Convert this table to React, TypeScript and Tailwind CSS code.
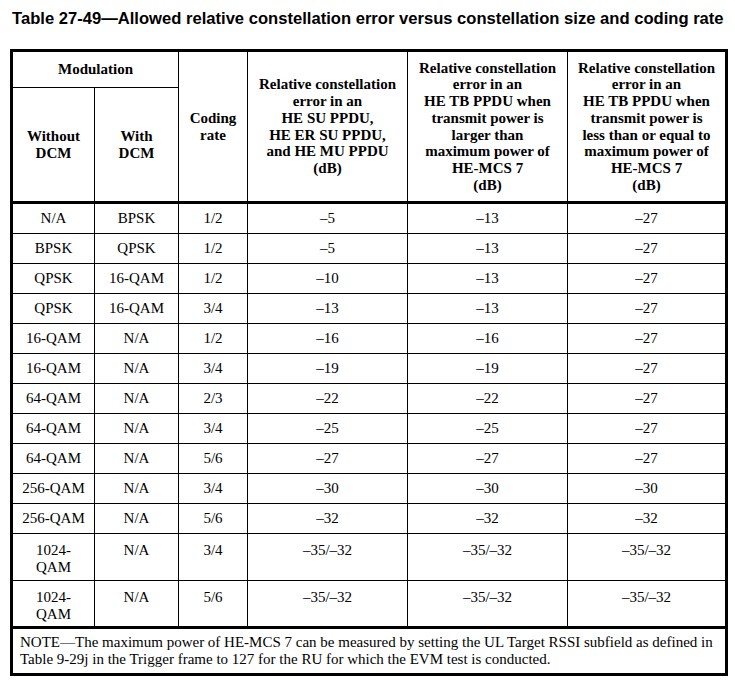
const rows: string[][] = [
	["N/A", "BPSK", "1/2", "–5", "–13", "–27"],
	["BPSK", "QPSK", "1/2", "–5", "–13", "–27"],
	["QPSK", "16-QAM", "1/2", "–10", "–13", "–27"],
	["QPSK", "16-QAM", "3/4", "–13", "–13", "–27"],
	["16-QAM", "N/A", "1/2", "–16", "–16", "–27"],
	["16-QAM", "N/A", "3/4", "–19", "–19", "–27"],
	["64-QAM", "N/A", "2/3", "–22", "–22", "–27"],
	["64-QAM", "N/A", "3/4", "–25", "–25", "–27"],
	["64-QAM", "N/A", "5/6", "–27", "–27", "–27"],
	["256-QAM", "N/A", "3/4", "–30", "–30", "–30"],
	["256-QAM", "N/A", "5/6", "–32", "–32", "–32"],
];

const tallRows: string[][] = [
	["N/A", "3/4", "–35/–32", "–35/–32", "–35/–32"],
	["N/A", "5/6", "–35/–32", "–35/–32", "–35/–32"],
];

function Lines({ lines }: { lines: string[] }) {
	return (
		<>
			{lines.map((l, i) => (
				<span key={i} className="block whitespace-nowrap">
					{l}
				</span>
			))}
		</>
	);
}

export default function App() {
	const head = "bg-white font-bold flex flex-col items-center justify-center text-center";
	return (
		<div className="min-h-[683px] w-[735px] bg-white text-black">
			<div className="pl-[12px] pt-[9px] font-['Liberation_Sans',Arial,sans-serif] text-[16.6px] font-bold leading-[20px] whitespace-nowrap">
				Table 27-49—Allowed relative constellation error versus constellation size and coding rate
			</div>

			<div className="mt-[20px] ml-[10px] grid w-[718px] grid-cols-[81px_83px_68px_159px_159px_157px] grid-rows-[35px_115px_repeat(11,29px)_46px_45px_46px] gap-px border-[3px] border-black bg-black font-['Liberation_Serif','Times_New_Roman',serif] text-[15px] leading-[16.7px]">
				{/* header */}
				<div className={`${head} col-span-2`}>Modulation</div>
				<div className={`${head} row-span-2 border-b-2 border-black`}>
					<Lines lines={["Coding", "rate"]} />
				</div>
				<div className={`${head} row-span-2 border-b-2 border-black`}>
					<Lines
						lines={[
							"Relative constellation",
							"error in an",
							"HE SU PPDU,",
							"HE ER SU PPDU,",
							"and HE MU PPDU",
							"(dB)",
						]}
					/>
				</div>
				<div className={`${head} row-span-2 border-b-2 border-black`}>
					<Lines
						lines={[
							"Relative constellation",
							"error in an",
							"HE TB PPDU when",
							"transmit power is",
							"larger than",
							"maximum power of",
							"HE-MCS 7",
							"(dB)",
						]}
					/>
				</div>
				<div className={`${head} row-span-2 border-b-2 border-black`}>
					<Lines
						lines={[
							"Relative constellation",
							"error in an",
							"HE TB PPDU when",
							"transmit power is",
							"less than or equal to",
							"maximum power of",
							"HE-MCS 7",
							"(dB)",
						]}
					/>
				</div>
				<div className={`${head} border-b-2 border-black`}>
					<Lines lines={["Without", "DCM"]} />
				</div>
				<div className={`${head} border-b-2 border-black`}>
					<Lines lines={["With", "DCM"]} />
				</div>

				{/* body */}
				{rows.map((r, i) =>
					r.map((c, j) => (
						<div key={`${i}-${j}`} className="bg-white pt-[6px] text-center">
							{c}
						</div>
					)),
				)}
				{tallRows.map((r, i) => (
					<>
						<div key={`t${i}`} className="bg-white pt-[8px] text-center">
							<Lines lines={["1024-", "QAM"]} />
						</div>
						{r.map((c, j) => (
							<div key={`t${i}-${j}`} className="bg-white pt-[8px] text-center">
								{c}
							</div>
						))}
					</>
				))}

				{/* note */}
				<div className="col-span-6 flex flex-col justify-center border-t-2 border-black bg-white px-[7px]">
					<span className="block whitespace-nowrap">
						NOTE—The maximum power of HE-MCS 7 can be measured by setting the UL Target RSSI subfield as defined in
					</span>
					<span className="block whitespace-nowrap">
						Table 9-29j in the Trigger frame to 127 for the RU for which the EVM test is conducted.
					</span>
				</div>
			</div>
		</div>
	);
}
